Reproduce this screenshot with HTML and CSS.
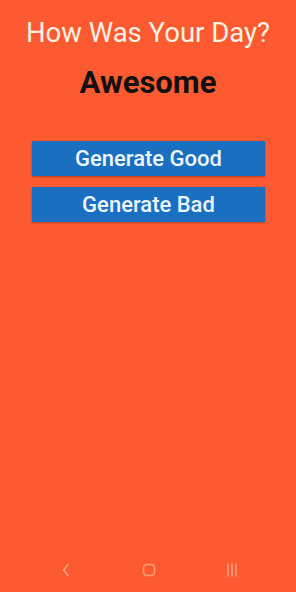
FILE: index.html
```html
<!DOCTYPE html>
<html>
    <head>
        <title>How Was Your Day?</title>
        <link rel="stylesheet" href="styles.css">
    </head>
    <body>
        <div id="app">
            <h1 class="title">How Was Your Day?</h1>
            <p class="mood">Awesome</p>
            <div class="buttons">
                <button class="gen">Generate Good</button>
                <button class="gen">Generate Bad</button>
            </div>
        </div>
        <div class="navbar">
            <svg width="10" height="14" viewBox="0 0 10 14"><path d="M7 1.5 L2.5 7 L7 12.5" fill="none" stroke="#ffa27c" stroke-width="1.6" stroke-linecap="round" stroke-linejoin="round"/></svg>
            <svg width="14" height="14" viewBox="0 0 14 14"><rect x="1.5" y="1.5" width="11" height="11" rx="3.5" fill="none" stroke="#ffa27c" stroke-width="1.6"/></svg>
            <svg width="12" height="16" viewBox="0 0 12 16"><path d="M2 1.5 V14.5 M6 1.5 V14.5 M10 1.5 V14.5" fill="none" stroke="#ffa27c" stroke-width="1.6"/></svg>
        </div>
    </body>
</html>
```

FILE: styles.css
```css
html,body{margin: 0;padding: 0;height: 100%;}
body{background-color: #fe5a32;font-family: Roboto, "Liberation Sans", sans-serif;display: flex;flex-direction: column;}
#app{flex: 1;text-align: center;}
.title{color: #fff2e2;font-size: 27.5px;font-weight: normal;margin: 17px 0 0 0;line-height: 32px;}
.mood{color: #111;font-size: 31px;font-weight: bold;margin: 16px 0 0 0;line-height: 36px;}
.buttons{display: flex;flex-direction: column;gap: 11px;padding: 0 31px 0 32px;margin-top: 40px;}
.gen{background-color: #1b6fc0;color: #eef6ff;border: none;font-family: Roboto, sans-serif;font-size: 22px;font-weight: 500;height: 35px;padding: 0;box-shadow: 0 1px 2px rgba(0,0,0,0.3);}
.navbar{height: 36px;display: flex;justify-content: space-between;align-items: center;padding: 0 58px 4px 61px;}
```
